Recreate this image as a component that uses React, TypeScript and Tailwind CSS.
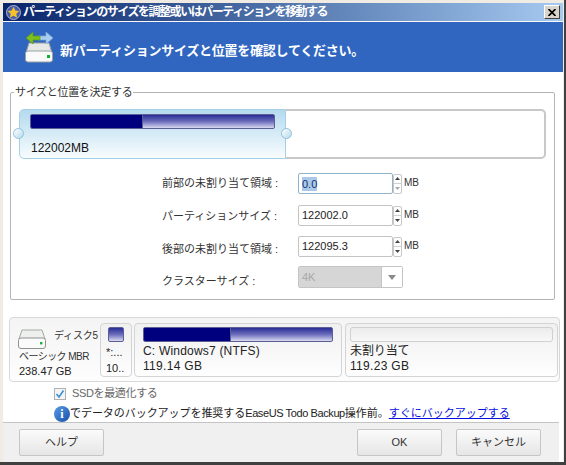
const font = { fontFamily: '"Liberation Sans", "Noto Sans CJK JP", sans-serif' };

function Spin({ focus }: { focus?: boolean }) {
  return (
    <div className="flex flex-col w-[9px] h-[20px] border border-[#c8c8c8] rounded-[2px] text-[#444]">
      <div className="flex-1 flex items-center justify-center border-b border-[#d0d0d0]">
        <svg width="5" height="3" viewBox="0 0 5 3"><path d="M2.5 0L5 3H0z" fill="#444" /></svg>
      </div>
      <div className="flex-1 flex items-center justify-center">
        <svg width="5" height="3" viewBox="0 0 5 3"><path d="M0 0H5L2.5 3z" fill={focus ? "#aaa" : "#444"} /></svg>
      </div>
    </div>
  );
}

function NumRow({ label, value, focus, labelCls, rowCls }: { label: string; value: string; focus?: boolean; labelCls: string; rowCls: string }) {
  return (
    <div className={`flex items-center h-[21px] ${rowCls}`}>
      <div className={`w-[136px] text-[11px] text-[#333] whitespace-nowrap ${labelCls}`}>{label}</div>
      <div className={`w-[95px] h-[21px] bg-white border rounded-[2px] flex items-center text-[11px] text-[#222] pl-[3px] ${focus ? "border-[#8fb4cc]" : "border-[#c4c4c4]"}`}>
        {focus ? <span className="bg-[#a9c9ea] text-[#14306a] leading-[14px]">{value}</span> : <span>{value}</span>}
      </div>
      <Spin focus={focus} />
      <div className="text-[10px] text-[#333] ml-[2px] -mt-[3px]">MB</div>
    </div>
  );
}

function Bar({ fill, widthClass }: { fill: boolean; widthClass: string }) {
  return (
    <div className="h-[15px] w-full border border-[#5b5f93] rounded-[2px] flex overflow-hidden bg-gradient-to-b from-[#2b2b96] via-[#6d6dbb] to-[#d9d9ef]">
      {fill ? <div className={`${widthClass} h-full bg-[#00007f] border-r border-[#5b5f93]`} /> : null}
    </div>
  );
}

function DiskIcon({ w, h }: { w: number; h: number }) {
  return (
    <svg width={w} height={h} viewBox="0 0 28 20">
      <path d="M4 1H24L27 10H1z" fill="#eef0ee" stroke="#a8aaa8" />
      <rect x="0.5" y="9" width="27" height="10.5" rx="2.5" fill="#fbfbfb" stroke="#8f918f" />
      <rect x="22" y="13" width="2.4" height="2.4" fill="#19b53a" />
    </svg>
  );
}

function Btn({ children, cls }: { children: string; cls: string }) {
  return (
    <div className={`${cls} h-[27px] border border-[#c6c6c6] rounded-[2px] bg-gradient-to-b from-[#fbfbfb] to-[#e6e6e6] flex items-center justify-center text-[11px] text-[#333]`}>
      {children}
    </div>
  );
}

export default function App() {
  return (
    <div style={font} className="relative w-[566px] h-[465px] overflow-hidden bg-[#f0ece4] flex flex-col pl-[3px] pr-[1px] pt-[3px] border-r-2 border-b-[3px] border-[#404040]">
      <div className="h-[18px] shrink-0 flex items-center bg-gradient-to-r from-[#0a246a] to-[#a6caf0]">
        <svg width="15" height="15" viewBox="0 0 15 15" className="ml-[3px]">
          <circle cx="7.5" cy="7.5" r="7" fill="#4a5ca8" stroke="#c8cfe8" strokeWidth="0.8" />
          <path d="M7.5 1.8l1.8 3.7 4 .5-3 2.8.8 4-3.6-2-3.6 2 .8-4-3-2.8 4-.5z" fill="#f5c22c" />
        </svg>
        <span className="ml-[2px] text-[12px] font-bold text-white tracking-[-1.45px] whitespace-nowrap">パーティションのサイズを調整或いはパーティションを移動する</span>
        <div className="ml-auto mr-[3px] w-[16px] h-[14px] bg-[#d8d4cc] border border-t-white border-l-white border-r-[#404040] border-b-[#404040] flex items-center justify-center">
          <svg width="8" height="7" viewBox="0 0 8 7"><path d="M0.5 0L7.5 7M7.5 0L0.5 7" stroke="#000" strokeWidth="1.7" /></svg>
        </div>
      </div>
      <div className="h-px shrink-0 bg-white/70" />
      <div className="flex-1 flex flex-col bg-white min-h-0">
        <div className="h-[50px] shrink-0 bg-[#3066c0] flex items-center">
          <svg width="30" height="35" viewBox="0 0 30 35" className="ml-[21px] -mt-[1px]">
            <path d="M5 14H25L28 24H2z" fill="#e6e8e6" stroke="#9aa0a0" />
            <rect x="1.5" y="22" width="27" height="11" rx="2.5" fill="#fafafa" stroke="#9aa0a0" />
            <rect x="23" y="26" width="3" height="3" fill="#12b030" />
            <path d="M14 7H22V3L29 9L22 15V11H14z" fill="#a8cdf0" stroke="#7ca8d8" strokeWidth="0.7" />
            <path d="M16 7H9V3L2 9L9 15V11H16z" fill="#7cc020" stroke="#5a9a10" strokeWidth="0.7" />
          </svg>
          <span className="ml-[6px] mt-[7px] text-[13px] font-bold text-white tracking-[-0.25px] whitespace-nowrap">新パーティションサイズと位置を確認してください。</span>
        </div>

        <div className="relative ml-[7px] mr-[8px] mt-[20px] h-[208px] shrink-0 border border-[#b4b4b4] rounded-[2px]">
          <span className="absolute -top-[9px] left-[3px] bg-white px-[1px] text-[11px] leading-[16px] text-[#333] tracking-[-0.3px] whitespace-nowrap">サイズと位置を決定する</span>
          <div className="relative ml-[8px] mt-[16px] w-[527px] h-[50px] flex">
            <div className="w-[267px] h-full bg-gradient-to-b from-[#b4daee] to-[#f8fcfe] border border-[#a5cfe6] rounded-l-[5px] px-[10px] pt-[4px]">
              <Bar fill widthClass="w-[112px]" />
              <div className="mt-[12px] ml-[1px] text-[12px] leading-[14px] text-[#111]">122002MB</div>
            </div>
            <div className="flex-1 h-full bg-white border-2 border-l-0 border-[#c8c8c8] rounded-r-[5px]" />
            <span className="absolute -left-[6px] top-[19px] w-[11px] h-[11px] rounded-full border border-[#8fc0dc] bg-gradient-to-br from-white to-[#b5daee]" />
            <span className="absolute left-[262px] top-[19px] w-[11px] h-[11px] rounded-full border border-[#8fc0dc] bg-gradient-to-br from-white to-[#b5daee]" />
          </div>
          <div className="ml-[151px] mt-[14px] flex flex-col">
            <NumRow label="前部の未割り当て領域 :" value="0.0" focus labelCls="" rowCls="" />
            <NumRow label="パーティションサイズ :" value="122002.0" labelCls="pt-[2px]" rowCls="mt-[11px]" />
            <NumRow label="後部の未割り当て領域 :" value="122095.3" labelCls="pt-[6px]" rowCls="mt-[10px]" />
            <div className="flex items-start h-[23px] mt-[9px]">
              <div className="w-[136px] text-[11px] text-[#333] whitespace-nowrap pt-[7px]">クラスターサイズ :</div>
              <div className="w-[105px] h-[22px] flex border border-[#c4c4c4] rounded-[2px]">
                <div className="w-[83px] bg-[#d6d6d6] border-r border-[#c4c4c4] text-[11px] text-[#a8a8a8] pl-[3px] flex items-center">4K</div>
                <div className="flex-1 flex items-center justify-center bg-white">
                  <svg width="8" height="5" viewBox="0 0 8 5"><path d="M0 0H8L4 5z" fill="#8a8a8a" /></svg>
                </div>
              </div>
            </div>
          </div>
        </div>

        <div className="ml-[6px] mr-[3px] mt-[17px] h-[65px] shrink-0 border border-[#d8d8d8] rounded-[4px] bg-gradient-to-b from-[#f4f4f4] to-[#fdfdfd] flex items-center">
          <div className="relative w-[90px] h-full">
            <div className="absolute left-[8px] top-[11px]"><DiskIcon w={28} h={20} /></div>
            <span className="absolute left-[44px] top-[11px] text-[10px] leading-[14px] text-[#333] whitespace-nowrap tracking-[-0.2px]">ディスク5</span>
            <span className="absolute left-[9px] top-[32px] text-[10px] leading-[14px] text-[#333] whitespace-nowrap tracking-[-0.55px]">ベーシック MBR</span>
            <span className="absolute left-[9px] top-[46px] text-[11px] leading-[14px] text-[#222] whitespace-nowrap">238.47 GB</span>
          </div>
          <div className="shrink-0 w-[32px] h-[54px] border border-[#d4d4d4] rounded-[4px] bg-gradient-to-b from-[#f0f0f0] to-[#fefefe] px-[7px] pt-[3px] overflow-hidden">
            <Bar fill={false} widthClass="w-0" />
            <div className="-mx-[2px] mt-[3px] text-[11px] leading-[15px] text-[#222] whitespace-nowrap">*:...</div>
            <div className="-mx-[2px] mt-[1px] text-[11px] leading-[14px] text-[#222] whitespace-nowrap">10..</div>
          </div>
          <div className="shrink-0 ml-[2px] w-[208px] h-[54px] border border-[#d4d4d4] rounded-[4px] bg-gradient-to-b from-[#f0f0f0] to-[#fefefe] px-[8px] pt-[3px]">
            <Bar fill widthClass="w-[87px]" />
            <div className="mt-[2px] text-[12px] leading-[15px] text-[#222] tracking-[0.2px] whitespace-nowrap">C: Windows7 (NTFS)</div>
            <div className="text-[12px] leading-[15px] text-[#222] tracking-[0.3px] whitespace-nowrap">119.14 GB</div>
          </div>
          <div className="shrink-0 ml-[3px] w-[213px] h-[54px] border border-[#d4d4d4] rounded-[4px] bg-gradient-to-b from-[#f0f0f0] to-[#fefefe] px-[4px] pt-[3px]">
            <div className="h-[15px] border border-[#d0d0d0] rounded-[3px] bg-gradient-to-b from-[#ececec] to-[#f8f8f8]" />
            <div className="mt-[2px] text-[12px] leading-[15px] text-[#222] tracking-[-0.1px] whitespace-nowrap">未割り当て</div>
            <div className="text-[12px] leading-[15px] text-[#222] tracking-[0.3px] whitespace-nowrap">119.23 GB</div>
          </div>
        </div>

        <div className="ml-[51px] mt-[5px] h-[13px] flex items-center shrink-0">
          <div className="w-[12px] h-[12px] border border-[#b0b0b0] bg-[#f4f4f4] flex items-center justify-center">
            <svg width="10" height="10" viewBox="0 0 10 10"><path d="M1.5 5L4 8L8.5 1.5" fill="none" stroke="#3a8fd0" strokeWidth="1.6" /></svg>
          </div>
          <span className="ml-[6px] text-[11px] text-[#666] tracking-[-0.35px] whitespace-nowrap">SSDを最適化する</span>
        </div>
        <div className="ml-[51px] mt-[5px] h-[17px] flex items-center shrink-0 whitespace-nowrap text-[11px] text-[#222]">
          <span className="w-[16px] h-[16px] rounded-full bg-gradient-to-br from-[#5a9be8] to-[#1450a8] text-white font-bold text-[12px] leading-[16px] text-center" style={{ fontFamily: '"Liberation Serif", serif' }}>i</span>
          <span className="tracking-[-0.05px]">でデータのバックアップを推奨する</span>
          <span className="tracking-[-0.4px]">EaseUS Todo Backup</span>
          <span>操作前。</span>
          <span className="text-[#0a10e0] underline">すぐにバックアップする</span>
        </div>

        <div className="flex-1 mr-[4px] bg-[#f0f0f0] border-t border-[#c4c4c4] flex items-center px-[16px]">
          <Btn cls="w-[85px]">ヘルプ</Btn>
          <Btn cls="w-[85px] ml-auto">OK</Btn>
          <Btn cls="w-[85px] ml-[14px] mr-[2px]">キャンセル</Btn>
        </div>
      </div>
    </div>
  );
}
